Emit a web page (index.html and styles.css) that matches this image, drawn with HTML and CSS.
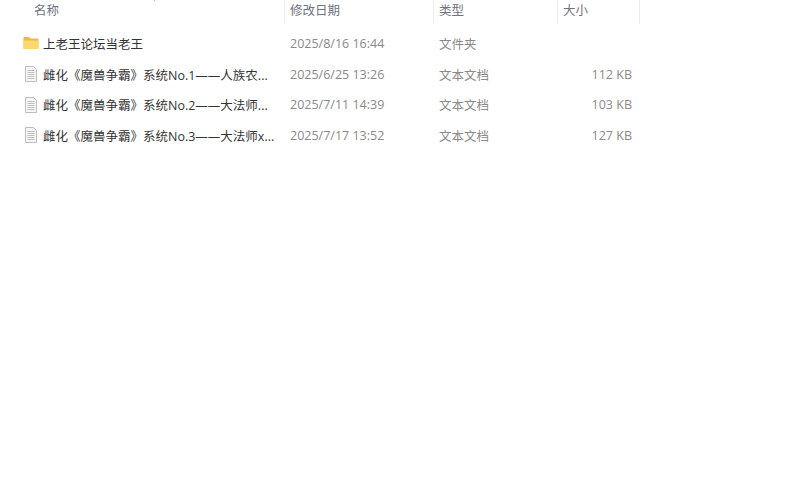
FILE: index.html
```html
<!DOCTYPE html>
<html lang="zh-CN">
<head>
    <meta charset="UTF-8">
    <title>文件列表</title>
    <link rel="stylesheet" href="styles.css">
</head>
<body>
    <div class="list">
        <!-- 表头 -->
        <div class="row head">
            <div class="cell name-head">名称<span class="sort"></span></div>
            <div class="cell date">修改日期</div>
            <div class="cell type">类型</div>
            <div class="cell size-head">大小</div>
        </div>

        <!-- 文件 -->
        <div class="files">
            <div class="row item">
                <div class="cell name">
                    <svg class="icon" width="16" height="14" viewBox="0 0 16 14">
                        <path d="M0.5 2 Q0.5 1 1.5 1 H6 L7.5 2.5 H14.5 Q15.5 2.5 15.5 3.5 V12 Q15.5 13 14.5 13 H1.5 Q0.5 13 0.5 12 Z" fill="#eeb93c"/>
                        <path d="M0.5 4.5 H15.5 V12 Q15.5 13 14.5 13 H1.5 Q0.5 13 0.5 12 Z" fill="#fbd76f"/>
                    </svg>
                    <span class="title">上老王论坛当老王</span>
                </div>
                <div class="cell date">2025/8/16 16:44</div>
                <div class="cell type">文件夹</div>
                <div class="cell size"></div>
            </div>
            <div class="row item">
                <div class="cell name">
                    <svg class="icon" width="16" height="16" viewBox="0 0 16 16">
                        <path d="M2.5 0.5 H10.5 L13.5 3.5 V15.5 H2.5 Z" fill="#f6f6f6" stroke="#bdbdbd"/>
                        <path d="M4.5 4.5 H11.5 M4.5 6.5 H11.5 M4.5 8.5 H11.5 M4.5 10.5 H11.5 M4.5 12.5 H11.5" stroke="#c0c0c0"/>
                    </svg>
                    <span class="title">雌化《魔兽争霸》系统No.1——人族农...</span>
                </div>
                <div class="cell date">2025/6/25 13:26</div>
                <div class="cell type">文本文档</div>
                <div class="cell size">112 KB</div>
            </div>
            <div class="row item">
                <div class="cell name">
                    <svg class="icon" width="16" height="16" viewBox="0 0 16 16">
                        <path d="M2.5 0.5 H10.5 L13.5 3.5 V15.5 H2.5 Z" fill="#f6f6f6" stroke="#bdbdbd"/>
                        <path d="M4.5 4.5 H11.5 M4.5 6.5 H11.5 M4.5 8.5 H11.5 M4.5 10.5 H11.5 M4.5 12.5 H11.5" stroke="#c0c0c0"/>
                    </svg>
                    <span class="title">雌化《魔兽争霸》系统No.2——大法师...</span>
                </div>
                <div class="cell date">2025/7/11 14:39</div>
                <div class="cell type">文本文档</div>
                <div class="cell size">103 KB</div>
            </div>
            <div class="row item">
                <div class="cell name">
                    <svg class="icon" width="16" height="16" viewBox="0 0 16 16">
                        <path d="M2.5 0.5 H10.5 L13.5 3.5 V15.5 H2.5 Z" fill="#f6f6f6" stroke="#bdbdbd"/>
                        <path d="M4.5 4.5 H11.5 M4.5 6.5 H11.5 M4.5 8.5 H11.5 M4.5 10.5 H11.5 M4.5 12.5 H11.5" stroke="#c0c0c0"/>
                    </svg>
                    <span class="title">雌化《魔兽争霸》系统No.3——大法师x...</span>
                </div>
                <div class="cell date">2025/7/17 13:52</div>
                <div class="cell type">文本文档</div>
                <div class="cell size">127 KB</div>
            </div>
        </div>
    </div>
</body>
</html>
```

FILE: styles.css
```css
body {
    margin: 0;
    width: 800px;
    height: 480px;
    overflow: hidden;
    background: #fff;
    font-family: "Open Sans", "Noto Sans CJK SC", sans-serif;
    font-size: 12.5px;
    color: #8a8a8a;
}
.row {
    display: grid;
    grid-template-columns: 285px 149px 124px 82px;
    align-items: center;
}
.head {
    height: 24px;
    color: #6d7480;
}
.head .cell {
    height: 24px;
    line-height: 22px;
    border-right: 1px solid #eeeeee;
}
.name-head {
    padding-left: 34px;
    position: relative;
}
.sort {
    position: absolute;
    left: 152px;
    top: -5px;
    width: 4px;
    height: 4px;
    border-right: 1px solid #b0b0b0;
    border-bottom: 1px solid #b0b0b0;
    transform: rotate(45deg);
}
.date,
.type,
.size-head {
    padding-left: 5px;
}
.files {
    padding-top: 4px;
}
.item {
    height: 30.7px;
}
.name {
    display: flex;
    align-items: center;
    padding-left: 23px;
}
.icon {
    flex: none;
    width: 16px;
    margin-right: 4px;
}
.title {
    color: #333333;
    white-space: nowrap;
}
.size {
    text-align: right;
    padding-right: 8px;
}
```
